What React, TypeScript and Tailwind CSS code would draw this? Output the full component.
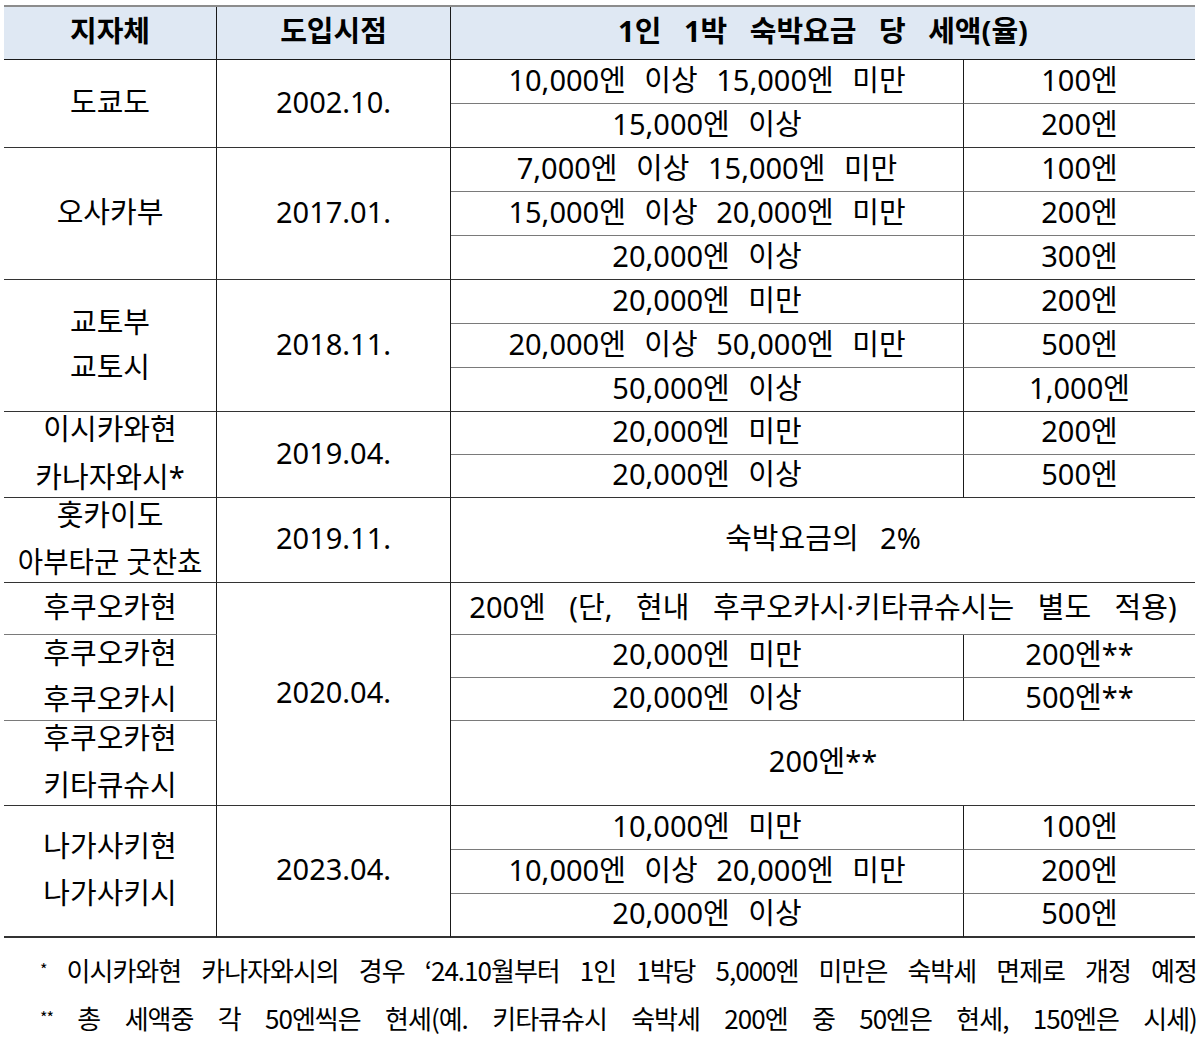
import React from "react";

const V = "border-r border-r-[#1a1a1a]";
const HB = "border-b border-b-[#333333]";
const HS = "border-b border-b-[#7a7a7a]";
const HE = "border-b-2 border-b-[#333333]";
const C = "flex items-center justify-center text-center whitespace-nowrap pb-[4px]";

function Lines({ lines, lh }: { lines: React.ReactNode[]; lh: string }) {
  return (
    <div className={`flex flex-col items-center ${lh}`}>
      {lines.map((l, i) => (
        <div key={i}>{l}</div>
      ))}
    </div>
  );
}

const note1 = ["이시카와현", "카나자와시의", "경우", "‘24.10월부터", "1인", "1박당", "5,000엔", "미만은", "숙박세", "면제로", "개정", "예정"];
const note2 = ["총", "세액중", "각", "50엔씩은", "현세(예.", "키타큐슈시", "숙박세", "200엔", "중", "50엔은", "현세,", "150엔은", "시세)"];

export default function App() {
  return (
    <div className="w-[1201px] h-[1042px] overflow-hidden bg-white text-black font-['Noto_Sans','Noto_Sans_CJK_KR',sans-serif]">
      <div className="ml-[4px] mt-[5px] w-[1191px] grid grid-cols-[213px_234px_513px_231px] grid-rows-[53px_44px_44px_44px_44px_44px_44px_44px_44px_43px_43px_85px_52px_43px_43px_85px_44px_44px_44px] border-t-2 border-t-[#8c8c8c] text-[29px] [word-spacing:11px]">
        {/* header */}
        <div className={`${C} ${V} border-b border-b-[#1a1a1a] bg-[#dfe8f3] font-bold`}>지자체</div>
        <div className={`${C} ${V} border-b border-b-[#1a1a1a] bg-[#dfe8f3] font-bold`}>도입시점</div>
        <div className={`${C} col-span-2 border-b border-b-[#1a1a1a] bg-[#dfe8f3] font-bold [word-spacing:15px]`}>1인 1박 숙박요금 당 세액(율)</div>

        {/* 도쿄도 */}
        <div className={`${C} row-span-2 ${V} ${HB}`}>도쿄도</div>
        <div className={`${C} row-span-2 ${V} ${HB}`}>2002.10.</div>
        <div className={`${C} ${V} ${HS}`}>10,000엔 이상 15,000엔 미만</div>
        <div className={`${C} ${HS}`}>100엔</div>
        <div className={`${C} ${V} ${HB}`}>15,000엔 이상</div>
        <div className={`${C} ${HB}`}>200엔</div>

        {/* 오사카부 */}
        <div className={`${C} row-span-3 ${V} ${HB}`}>오사카부</div>
        <div className={`${C} row-span-3 ${V} ${HB}`}>2017.01.</div>
        <div className={`${C} ${V} ${HS}`}>7,000엔 이상 15,000엔 미만</div>
        <div className={`${C} ${HS}`}>100엔</div>
        <div className={`${C} ${V} ${HS}`}>15,000엔 이상 20,000엔 미만</div>
        <div className={`${C} ${HS}`}>200엔</div>
        <div className={`${C} ${V} ${HB}`}>20,000엔 이상</div>
        <div className={`${C} ${HB}`}>300엔</div>

        {/* 교토 */}
        <div className={`${C} row-span-3 ${V} ${HB}`}>
          <Lines lines={["교토부", "교토시"]} lh="leading-[45px]" />
        </div>
        <div className={`${C} row-span-3 ${V} ${HB}`}>2018.11.</div>
        <div className={`${C} ${V} ${HS}`}>20,000엔 미만</div>
        <div className={`${C} ${HS}`}>200엔</div>
        <div className={`${C} ${V} ${HS}`}>20,000엔 이상 50,000엔 미만</div>
        <div className={`${C} ${HS}`}>500엔</div>
        <div className={`${C} ${V} ${HB}`}>50,000엔 이상</div>
        <div className={`${C} ${HB}`}>1,000엔</div>

        {/* 이시카와 */}
        <div className={`${C} row-span-2 ${V} ${HB}`}>
          <Lines lines={["이시카와현", "카나자와시*"]} lh="leading-[48px]" />
        </div>
        <div className={`${C} row-span-2 ${V} ${HB}`}>2019.04.</div>
        <div className={`${C} ${V} ${HS}`}>20,000엔 미만</div>
        <div className={`${C} ${HS}`}>200엔</div>
        <div className={`${C} ${V} ${HB}`}>20,000엔 이상</div>
        <div className={`${C} ${HB}`}>500엔</div>

        {/* 홋카이도 */}
        <div className={`${C} ${V} ${HB}`}>
          <Lines
            lines={[
              "홋카이도",
              <span className="inline-block scale-x-[0.95] [word-spacing:0px]">아부타군 굿찬쵸</span>,
            ]}
            lh="leading-[47px]"
          />
        </div>
        <div className={`${C} ${V} ${HB}`}>2019.11.</div>
        <div className={`${C} col-span-2 ${HB} [word-spacing:14px]`}>숙박요금의 2%</div>

        {/* 후쿠오카 */}
        <div className={`${C} ${V} ${HS}`}>후쿠오카현</div>
        <div className={`${C} row-span-4 ${V} ${HB}`}>2020.04.</div>
        <div className={`${C} col-span-2 ${HS} [word-spacing:16px]`}>200엔 (단, 현내 후쿠오카시·키타큐슈시는 별도 적용)</div>
        <div className={`${C} row-span-2 ${V} ${HS}`}>
          <Lines lines={["후쿠오카현", "후쿠오카시"]} lh="leading-[46px]" />
        </div>
        <div className={`${C} ${V} ${HS}`}>20,000엔 미만</div>
        <div className={`${C} ${HS}`}>200엔**</div>
        <div className={`${C} ${V} ${HS}`}>20,000엔 이상</div>
        <div className={`${C} ${HS}`}>500엔**</div>
        <div className={`${C} ${V} ${HB}`}>
          <Lines lines={["후쿠오카현", "키타큐슈시"]} lh="leading-[47px]" />
        </div>
        <div className={`${C} col-span-2 ${HB}`}>200엔**</div>

        {/* 나가사키 */}
        <div className={`${C} row-span-3 ${V} ${HE}`}>
          <Lines lines={["나가사키현", "나가사키시"]} lh="leading-[47px]" />
        </div>
        <div className={`${C} row-span-3 ${V} ${HE}`}>2023.04.</div>
        <div className={`${C} ${V} ${HS}`}>10,000엔 미만</div>
        <div className={`${C} ${HS}`}>100엔</div>
        <div className={`${C} ${V} ${HS}`}>10,000엔 이상 20,000엔 미만</div>
        <div className={`${C} ${HS}`}>200엔</div>
        <div className={`${C} ${V} ${HE}`}>20,000엔 이상</div>
        <div className={`${C} ${HE}`}>500엔</div>
      </div>

      <div className="mt-[7px] pl-[40px] pr-[4px] text-[26px] font-['Noto_Sans_CJK_KR',sans-serif] tracking-[-1px]">
        <div className="flex h-[48px] items-center justify-between">
          <span className="text-[16px]">*</span>
          {note1.map((w, i) => (
            <span key={i}>{w}</span>
          ))}
        </div>
        <div className="flex h-[48px] items-center justify-between">
          <span className="text-[16px]">**</span>
          {note2.map((w, i) => (
            <span key={i}>{w}</span>
          ))}
        </div>
      </div>
    </div>
  );
}
